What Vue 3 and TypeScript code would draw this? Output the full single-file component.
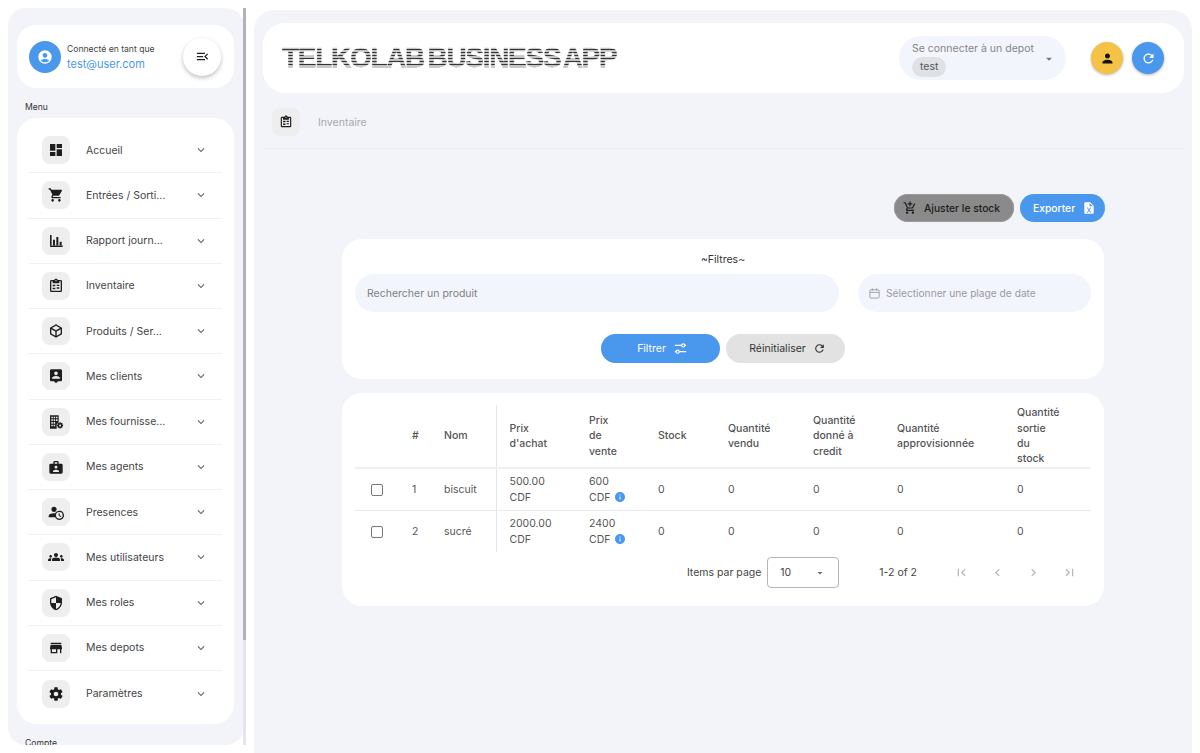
<script setup lang="ts">
const icons = {
  dashboard: 'M3 13h8V3H3v10zm0 8h8v-6H3v6zm10 0h8V11h-8v10zm0-18v6h8V3h-8z',
  cart: 'M7 18c-1.1 0-1.99.9-1.99 2S5.9 22 7 22s2-.9 2-2-.9-2-2-2zM1 2v2h2l3.6 7.59-1.35 2.45c-.16.28-.25.61-.25.96 0 1.1.9 2 2 2h12v-2H7.42c-.14 0-.25-.11-.25-.25l.03-.12.9-1.63h7.45c.75 0 1.41-.41 1.75-1.03l3.58-6.49c.08-.14.12-.31.12-.48 0-.55-.45-1-1-1H5.21l-.94-2H1zm16 16c-1.1 0-1.99.9-1.99 2s.89 2 1.99 2 2-.9 2-2-.9-2-2-2z',
  chart: 'M3 3h2.4v16H3zM3 18.6h19V21H3zM7.5 10h3v9h-3zM12.5 6h3v13h-3zM17.5 13h3v6h-3z',
  clipboard: 'M19 3h-4.18C14.4 1.84 13.3 1 12 1s-2.4.84-2.82 2H5a2 2 0 0 0-2 2v14a2 2 0 0 0 2 2h14a2 2 0 0 0 2-2V5a2 2 0 0 0-2-2zM12 3c.55 0 1 .45 1 1s-.45 1-1 1-1-.45-1-1 .45-1 1-1zM19 19H5V5h2v3h10V5h2v14zM7 10h4v2.5H7zM13 10h4v2H13zM7 14.5h4V17H7zM13 14h4v2h-4z',
  cube: 'M21,16.5C21,16.88 20.79,17.21 20.47,17.38L12.57,21.82C12.41,21.94 12.21,22 12,22C11.79,22 11.59,21.94 11.43,21.82L3.53,17.38C3.21,17.21 3,16.88 3,16.5V7.5C3,7.12 3.21,6.79 3.53,6.62L11.43,2.18C11.59,2.06 11.79,2 12,2C12.21,2 12.41,2.06 12.57,2.18L20.47,6.62C20.79,6.79 21,7.12 21,7.5V16.5M12,4.15L6.04,7.5L12,10.85L17.96,7.5L12,4.15M5,15.91L11,19.29V12.58L5,9.21V15.91M19,15.91V9.21L13,12.58V19.29L19,15.91Z',
  personPin: 'M19 2H5c-1.11 0-2 .9-2 2v14c0 1.1.89 2 2 2h4l3 3 3-3h4c1.1 0 2-.9 2-2V4c0-1.1-.9-2-2-2zm-7 3.3c1.49 0 2.7 1.21 2.7 2.7 0 1.49-1.21 2.7-2.7 2.7-1.49 0-2.7-1.21-2.7-2.7 0-1.49 1.21-2.7 2.7-2.7zM18 16H6v-.9c0-2 4-3.1 6-3.1s6 1.1 6 3.1v.9z',
  building: 'M3 2h13v10.5a6 6 0 0 0-3 3.5v6H3zM5 4v2.5h2.2V4zM8.5 4v2.5h2.2V4zM12 4v2.5h2.2V4zM5 8v2.5h2.2V8zM8.5 8v2.5h2.2V8zM12 8v2.5h2.2V8zM5 12v2.5h2.2V12zM8.5 12v2.5h2.2V12zM5 16v2.5h2.2V16zM8.5 16v2.5h2.2V16zM17.2 12.5h1.8l.3 1.5 1.4-.8 1.3 1.3-.8 1.4 1.5.3v1.8l-1.5.3.8 1.4-1.3 1.3-1.4-.8-.3 1.5h-1.8l-.3-1.5-1.4.8-1.3-1.3.8-1.4-1.5-.3v-1.8l1.5-.3-.8-1.4 1.3-1.3 1.4.8zM18.1 15.9a1.5 1.5 0 1 0 0 3 1.5 1.5 0 0 0 0-3z',
  badge: 'M20 7h-4V5a2 2 0 0 0-2-2h-4a2 2 0 0 0-2 2v2H4a2 2 0 0 0-2 2v11a2 2 0 0 0 2 2h16a2 2 0 0 0 2-2V9a2 2 0 0 0-2-2zM10 5h4v2h-4zM12 10a2.2 2.2 0 1 1 0 4.4 2.2 2.2 0 0 1 0-4.4zM7.5 19.5v-1.2c0-1.5 3-2.3 4.5-2.3s4.5.8 4.5 2.3v1.2z',
  accountClock: 'M10.63,14.1C12.23,10.58 16.38,9.03 19.9,10.63C23.42,12.23 24.97,16.38 23.37,19.9C22.24,22.4 19.75,24 17,24C14.3,24 11.83,22.44 10.67,20H1V18C1.06,16.86 1.84,15.93 3.34,15.18C4.84,14.43 6.72,14.04 9,14C9.57,14 10.11,14.05 10.63,14.1V14.1M9,4C10.12,4.03 11.06,4.42 11.81,5.17C12.56,5.92 12.93,6.86 12.93,8C12.93,9.14 12.56,10.08 11.81,10.83C11.06,11.58 10.12,11.95 9,11.95C7.88,11.95 6.94,11.58 6.19,10.83C5.44,10.08 5.07,9.14 5.07,8C5.07,6.86 5.44,5.92 6.19,5.17C6.94,4.42 7.88,4.03 9,4M17,22A5,5 0 0,0 22,17A5,5 0 0,0 17,12A5,5 0 0,0 12,17A5,5 0 0,0 17,22M16,14H17.5V16.82L19.94,18.23L19.19,19.53L16,17.69V14Z',
  groups: 'M12 12.75c1.63 0 3.07.39 4.24.9 1.08.48 1.76 1.56 1.76 2.73V18H6v-1.61c0-1.18.68-2.26 1.76-2.73 1.17-.52 2.61-.91 4.24-.91zM4 13c1.1 0 2-.9 2-2s-.9-2-2-2-2 .9-2 2 .9 2 2 2zm1.13 1.1c-.37-.06-.74-.1-1.13-.1-.99 0-1.93.21-2.78.58C.48 14.9 0 15.62 0 16.43V18h4.5v-1.61c0-.83.23-1.61.63-2.29zM20 13c1.1 0 2-.9 2-2s-.9-2-2-2-2 .9-2 2 .9 2 2 2zm4 3.43c0-.81-.48-1.53-1.22-1.85-.85-.37-1.79-.58-2.78-.58-.39 0-.76.04-1.13.1.4.68.63 1.46.63 2.29V18H24v-1.57zM12 6c1.66 0 3 1.34 3 3s-1.34 3-3 3-3-1.34-3-3 1.34-3 3-3z',
  security: 'M12 1L3 5v6c0 5.55 3.84 10.74 9 12 5.16-1.26 9-6.45 9-12V5l-9-4zm0 10.99h7c-.53 4.12-3.28 7.79-7 8.94V12H5V6.3l7-3.11v8.8z',
  store: 'M20 4H4v2h16V4zm1 10v-2l-1-5H4l-1 5v2h1v6h10v-6h4v6h2v-6h1zm-9 4H6v-4h6v4z',
  cog: 'M12,15.5A3.5,3.5 0 0,1 8.5,12A3.5,3.5 0 0,1 12,8.5A3.5,3.5 0 0,1 15.5,12A3.5,3.5 0 0,1 12,15.5M19.43,12.97C19.47,12.65 19.5,12.33 19.5,12C19.5,11.67 19.47,11.34 19.43,11L21.54,9.37C21.73,9.22 21.78,8.95 21.66,8.73L19.66,5.27C19.54,5.05 19.27,4.96 19.05,5.05L16.56,6.05C16.04,5.66 15.5,5.32 14.87,5.07L14.5,2.42C14.46,2.18 14.25,2 14,2H10C9.75,2 9.54,2.18 9.5,2.42L9.13,5.07C8.5,5.32 7.96,5.66 7.44,6.05L4.95,5.05C4.73,4.96 4.46,5.05 4.34,5.27L2.34,8.73C2.21,8.95 2.27,9.22 2.46,9.37L4.57,11C4.53,11.34 4.5,11.67 4.5,12C4.5,12.33 4.53,12.65 4.57,12.97L2.46,14.63C2.27,14.78 2.21,15.05 2.34,15.27L4.34,18.73C4.46,18.95 4.73,19.03 4.95,18.95L7.44,17.94C7.96,18.34 8.5,18.68 9.13,18.93L9.5,21.58C9.54,21.82 9.75,22 10,22H14C14.25,22 14.46,21.82 14.5,21.58L14.87,18.93C15.5,18.67 16.04,18.34 16.56,17.94L19.05,18.95C19.27,19.03 19.54,18.95 19.66,18.73L21.66,15.27C21.78,15.05 21.73,14.78 21.54,14.63L19.43,12.97Z',
  accountCircle: 'M12 2C6.48 2 2 6.48 2 12s4.48 10 10 10 10-4.48 10-10S17.52 2 12 2zm0 4c1.93 0 3.5 1.57 3.5 3.5S13.93 13 12 13s-3.5-1.57-3.5-3.5S10.07 6 12 6zm0 14c-2.03 0-4.43-.82-6.14-2.88C7.55 15.8 9.68 15 12 15s4.45.8 6.14 2.12C16.43 19.18 14.03 20 12 20z',
  menuOpen: 'M3 18h13v-2H3v2zm0-5h10v-2H3v2zm0-7v2h13V6H3zm18 9.59L17.42 12 21 8.41 19.59 7l-5 5 5 5L21 15.59z',
  chevron: 'M7.41 8.59L12 13.17l4.59-4.58L18 10l-6 6-6-6z',
  person: 'M12 12c2.21 0 4-1.79 4-4s-1.79-4-4-4-4 1.79-4 4 1.79 4 4 4zm0 2c-2.67 0-8 1.34-8 4v2h16v-2c0-2.66-5.33-4-8-4z',
  refresh: 'M17.65 6.35C16.2 4.9 14.21 4 12 4c-4.42 0-7.99 3.58-7.99 8s3.57 8 7.99 8c3.73 0 6.84-2.55 7.73-6h-2.08c-.82 2.33-3.04 4-5.65 4-3.31 0-6-2.69-6-6s2.69-6 6-6c1.66 0 3.14.69 4.22 1.78L13 11h7V4l-2.35 2.35z',
  addCart: 'M11 9h2V6h3V4h-3V1h-2v3H8v2h3v3zm-4 9c-1.1 0-1.99.9-1.99 2S5.9 22 7 22s2-.9 2-2-.9-2-2-2zm10 0c-1.1 0-1.99.9-1.99 2s.89 2 1.99 2 2-.9 2-2-.9-2-2-2zm-9.83-3.25l.03-.12.9-1.63h7.45c.75 0 1.41-.41 1.75-1.03l3.86-7.01L19.42 4h-.01l-1.1 2-2.76 5H8.53l-.13-.27L6.16 6l-.95-2-.94-2H1v2h2l3.6 7.59-1.35 2.45c-.16.28-.25.61-.25.96 0 1.1.9 2 2 2h12v-2H7.42c-.13 0-.25-.11-.25-.25z',
  fileExcel: 'M14,2H6A2,2 0 0,0 4,4V20A2,2 0 0,0 6,22H18A2,2 0 0,0 20,20V8L14,2M15.8,20H14L12,16.6L10,20H8.2L11.1,15.5L8.2,11H10L12,14.4L14,11H15.8L12.9,15.5L15.8,20M13,9V3.5L18.5,9H13Z',
  info: 'M12 2C6.48 2 2 6.48 2 12s4.48 10 10 10 10-4.48 10-10S17.52 2 12 2zm1 15h-2v-6h2v6zm0-8h-2V7h2v2z',
  caret: 'M7 10l5 5 5-5z',
  first: 'M18.41 16.59L13.82 12l4.59-4.59L17 6l-6 6 6 6zM6 6h2v12H6z',
  prev: 'M15.41 7.41L14 6l-6 6 6 6 1.41-1.41L10.83 12z',
  next: 'M10 6L8.59 7.41 13.17 12l-4.58 4.59L10 18l6-6z',
  last: 'M5.59 7.41L10.18 12l-4.59 4.59L7 18l6-6-6-6zM16 6h2v12h-2z',
}

const menu = [
  { label: 'Accueil', icon: icons.dashboard },
  { label: 'Entrées / Sorti...', icon: icons.cart },
  { label: 'Rapport journ...', icon: icons.chart },
  { label: 'Inventaire', icon: icons.clipboard },
  { label: 'Produits / Ser...', icon: icons.cube },
  { label: 'Mes clients', icon: icons.personPin },
  { label: 'Mes fournisse...', icon: icons.building },
  { label: 'Mes agents', icon: icons.badge },
  { label: 'Presences', icon: icons.accountClock },
  { label: 'Mes utilisateurs', icon: icons.groups },
  { label: 'Mes roles', icon: icons.security },
  { label: 'Mes depots', icon: icons.store },
  { label: 'Paramètres', icon: icons.cog },
]

const columnWidths = [41, 32, 68, 77, 69, 70, 85, 84, 120, 90]

const rows = [
  { id: 1, name: 'biscuit', buy: '500.00', sell: '600' },
  { id: 2, name: 'sucré', buy: '2000.00', sell: '2400' },
]

const pager = [icons.first, icons.prev, icons.next, icons.last]
</script>

<template>
  <div class="page">
    <div class="side-wrap">
      <aside class="sidebar">
        <div class="user-card">
          <div class="avatar">
            <svg viewBox="0 0 24 24" class="avatar-icon"><path :d="icons.accountCircle" /></svg>
          </div>
          <div class="user-text">
            <span class="user-line">Connecté en tant que</span>
            <span class="user-mail">test@user.com</span>
          </div>
          <button class="toggle">
            <svg viewBox="0 0 24 24"><path :d="icons.menuOpen" /></svg>
          </button>
        </div>

        <div class="side-label">Menu</div>

        <nav class="menu-card">
          <div v-for="item in menu" :key="item.label" class="menu-item">
            <span class="icon-box">
              <svg viewBox="0 0 24 24"><path :d="item.icon" fill-rule="evenodd" /></svg>
            </span>
            <span class="menu-text">{{ item.label }}</span>
            <svg viewBox="0 0 24 24" class="chevron"><path :d="icons.chevron" /></svg>
          </div>
        </nav>

        <div class="side-label account">Compte</div>
      </aside>
      <div class="scroll-track"><div class="scroll-thumb"></div></div>
    </div>

    <main class="main">
      <header class="top-card">
        <h1 class="brand">TELKOLAB BUSINESS APP</h1>
        <div class="depot">
          <div class="depot-text">
            <span class="depot-label">Se connecter à un depot</span>
            <span class="chip">test</span>
          </div>
          <svg viewBox="0 0 24 24" class="depot-caret"><path :d="icons.caret" /></svg>
        </div>
        <button class="round yellow">
          <svg viewBox="0 0 24 24"><path :d="icons.person" /></svg>
        </button>
        <button class="round blue">
          <svg viewBox="0 0 24 24"><path :d="icons.refresh" /></svg>
        </button>
      </header>

      <div class="crumb">
        <span class="icon-box">
          <svg viewBox="0 0 24 24"><path :d="icons.clipboard" fill-rule="evenodd" /></svg>
        </span>
        <span class="crumb-text">Inventaire</span>
      </div>

      <section class="content">
        <div class="actions">
          <button class="pill adjust">
            <svg viewBox="0 0 24 24"><path :d="icons.addCart" /></svg>
            Ajuster le stock
          </button>
          <button class="pill export">
            Exporter
            <svg viewBox="0 0 24 24"><path :d="icons.fileExcel" /></svg>
          </button>
        </div>

        <div class="card filters">
          <div class="filters-title">~Filtres~</div>
          <div class="filters-row">
            <div class="field grow">Rechercher un produit</div>
            <div class="field dates">
              <svg viewBox="0 0 24 24" class="calendar">
                <rect x="3.5" y="5" width="17" height="15.5" rx="2" />
                <path d="M3.5 10h17M8 2.5V7M16 2.5V7" />
              </svg>
              Sélectionner une plage de date
            </div>
          </div>
          <div class="filters-buttons">
            <button class="wide-btn primary">
              Filtrer
              <svg viewBox="0 0 24 24" class="tune">
                <path d="M3 7h11M19 7h2M3 17h2M10 17h11" />
                <circle cx="16.5" cy="7" r="2.5" />
                <circle cx="7.5" cy="17" r="2.5" />
              </svg>
            </button>
            <button class="wide-btn neutral">
              Réinitialiser
              <svg viewBox="0 0 24 24"><path :d="icons.refresh" /></svg>
            </button>
          </div>
        </div>

        <div class="card table-card">
          <table class="grid">
            <colgroup>
              <col v-for="(w, i) in columnWidths" :key="i" :style="{ width: w + 'px' }" />
            </colgroup>
            <thead>
              <tr>
                <th></th>
                <th>#</th>
                <th class="split">Nom</th>
                <th class="after-split">Prix<br />d'achat</th>
                <th>Prix<br />de<br />vente</th>
                <th>Stock</th>
                <th>Quantité<br />vendu</th>
                <th>Quantité<br />donné à<br />credit</th>
                <th>Quantité<br />approvisionnée</th>
                <th>Quantité<br />sortie<br />du<br />stock</th>
              </tr>
            </thead>
            <tbody>
              <tr v-for="row in rows" :key="row.id">
                <td><span class="check"></span></td>
                <td>{{ row.id }}</td>
                <td class="split">{{ row.name }}</td>
                <td class="after-split">{{ row.buy }}<br />CDF</td>
                <td>
                  {{ row.sell }}<br />CDF
                  <svg viewBox="0 0 24 24" class="info"><path :d="icons.info" /></svg>
                </td>
                <td>0</td>
                <td>0</td>
                <td>0</td>
                <td>0</td>
                <td>0</td>
              </tr>
            </tbody>
          </table>

          <div class="pagination">
            <span class="per-page">Items par page</span>
            <div class="per-select">
              <span>10</span>
              <svg viewBox="0 0 24 24"><path :d="icons.caret" /></svg>
            </div>
            <span class="range">1-2 of 2</span>
            <div class="pager">
              <span v-for="(p, i) in pager" :key="i" class="pager-btn">
                <svg viewBox="0 0 24 24"><path :d="p" /></svg>
              </span>
            </div>
          </div>
        </div>
      </section>
    </main>
  </div>
</template>

<style>
html,
body {
  margin: 0;
  background: #fff;
}
</style>

<style scoped>
.page {
  display: flex;
  height: 100vh;
  overflow: hidden;
  font-family: Inter, 'Noto Sans', sans-serif;
  font-size: 10.5px;
  color: #444;
}

button {
  font-family: inherit;
  letter-spacing: inherit;
  border: none;
  cursor: pointer;
}

/* SIDEBAR */
.side-wrap {
  position: relative;
  flex: 0 0 238px;
  height: 737px;
  margin: 8px 8px 0 8px;
}

.sidebar {
  width: 236px;
  height: 100%;
  box-sizing: border-box;
  padding: 17px 10px 0 9px;
  background: #f2f4f9;
  border-radius: 18px;
  overflow: hidden;
}

.scroll-track {
  position: absolute;
  top: 0;
  right: 0;
  bottom: 0;
  width: 3px;
  background: #e6e6ea;
}

.scroll-thumb {
  height: 632px;
  background: #b2b2b6;
}

.user-card {
  display: flex;
  align-items: center;
  height: 63px;
  box-sizing: border-box;
  padding: 0 13px 0 12px;
  background: #fff;
  border-radius: 20px;
}

.avatar {
  flex: none;
  width: 32px;
  height: 32px;
  display: flex;
  align-items: center;
  justify-content: center;
  border-radius: 50%;
  background: #4a97ee;
}

.avatar-icon {
  width: 16px;
  height: 16px;
  fill: #fff;
}

.user-text {
  flex: 1;
  display: flex;
  flex-direction: column;
  gap: 3px;
  margin: 1px 0 0 6px;
  min-width: 0;
}

.user-line {
  font-size: 8.6px;
  color: #444;
  white-space: nowrap;
}

.user-mail {
  font-size: 11px;
  color: #4a97ee;
}

.toggle {
  flex: none;
  width: 38px;
  height: 38px;
  display: flex;
  align-items: center;
  justify-content: center;
  padding: 0;
  border-radius: 50%;
  background: #fff;
  box-shadow: 0 2px 4px rgba(0, 0, 0, 0.25);
}

.toggle svg {
  width: 15px;
  height: 15px;
  fill: #222;
}

.side-label {
  margin: 13px 0 5px 8px;
  font-size: 8.6px;
  line-height: 12px;
  color: #333;
}

.side-label.account {
  margin-top: 13px;
}

.menu-card {
  padding: 10px 12px 8px;
  background: #fff;
  border-radius: 20px;
}

.menu-item {
  display: flex;
  align-items: center;
  height: 45.25px;
  box-sizing: border-box;
  padding: 0 13px;
  border-bottom: 1px solid #f0f0f2;
}

.menu-item:last-child {
  border-bottom: none;
}

.icon-box {
  flex: none;
  width: 28px;
  height: 28px;
  display: flex;
  align-items: center;
  justify-content: center;
  background: #eee;
  border-radius: 8px;
}

.icon-box svg {
  width: 16px;
  height: 16px;
  fill: #1e1e1e;
}

.menu-text {
  flex: 1;
  margin-left: 16px;
  color: #444;
  white-space: nowrap;
}

.chevron {
  flex: none;
  width: 14px;
  height: 14px;
  margin-right: 1px;
  fill: #666;
}

/* MAIN */
.main {
  flex: 1;
  margin: 10px 8px 0 0;
  padding: 13px 8px 0 9px;
  background: #f2f4f9;
  border-radius: 20px 20px 0 0;
  min-width: 0;
}

.top-card {
  display: flex;
  align-items: center;
  height: 70px;
  box-sizing: border-box;
  padding: 0 20px 0 19px;
  background: #fff;
  border-radius: 22px;
}

.brand {
  flex: 1;
  margin: 0;
  font-family: 'Liberation Sans', sans-serif;
  font-size: 28px;
  line-height: 30px;
  font-weight: 700;
  letter-spacing: -1.3px;
  word-spacing: -3px;
  white-space: nowrap;
  color: transparent;
  -webkit-text-stroke: 0.5px transparent;
  background: repeating-linear-gradient(180deg, #333 0 1.5px, #c4c4c4 1.5px 3px);
  -webkit-background-clip: text;
  background-clip: text;
}

.depot {
  flex: none;
  width: 167px;
  height: 44px;
  box-sizing: border-box;
  display: flex;
  align-items: center;
  justify-content: space-between;
  margin-right: 25px;
  padding: 2px 10px 0 13px;
  background: #f3f5fd;
  border-radius: 22px;
}

.depot-text {
  display: flex;
  flex-direction: column;
  align-items: flex-start;
  gap: 1px;
}

.depot-label {
  color: #858585;
  white-space: nowrap;
  line-height: 14px;
}

.chip {
  padding: 0 8px;
  line-height: 20px;
  color: #555;
  background: #e0e1e6;
  border-radius: 10px;
}

.depot-caret {
  flex: none;
  width: 14px;
  height: 14px;
  fill: #777;
}

.round {
  flex: none;
  width: 32px;
  height: 32px;
  display: flex;
  align-items: center;
  justify-content: center;
  padding: 0;
  border-radius: 50%;
  box-shadow: 0 1px 3px rgba(0, 0, 0, 0.3);
}

.round + .round {
  margin-left: 9px;
}

.round svg {
  width: 15px;
  height: 15px;
}

.yellow {
  background: #f4c244;
}

.yellow svg {
  fill: #111;
}

.blue {
  background: #4a97ee;
}

.blue svg {
  fill: #fff;
}

.crumb {
  display: flex;
  align-items: center;
  height: 56px;
  box-sizing: border-box;
  padding: 3px 0 0 9px;
  border-bottom: 1px solid #e9e9ee;
}

.crumb .icon-box svg {
  width: 14px;
  height: 14px;
}

.crumb-text {
  margin-left: 18px;
  color: #a9a9ae;
}

.content {
  margin: 45px 80px 0 79px;
}

.actions {
  display: flex;
  justify-content: flex-end;
  gap: 6px;
  margin: 0 -1px 17px 0;
}

.pill {
  display: flex;
  align-items: center;
  height: 28px;
  padding: 0 13px;
  gap: 7px;
  border-radius: 14px;
  font-size: 10.3px;
  font-weight: 500;
}

.pill svg {
  flex: none;
  width: 14px;
  height: 14px;
}

.adjust {
  width: 120px;
  padding: 0 0 0 9px;
  background: #8a8a8a;
  color: #1c1c1c;
  box-shadow: 0 0 0 1px #9a9a9a inset;
}

.adjust svg {
  fill: #1c1c1c;
}

.export {
  width: 85px;
  background: #4a97ee;
  color: #fff;
}

.export svg {
  fill: #fff;
}

.card {
  background: #fff;
  border-radius: 20px;
}

.filters {
  height: 140px;
  box-sizing: border-box;
  padding: 13px 13px 0;
}

.filters-title {
  text-align: center;
  line-height: 16px;
  color: #333;
}

.filters-row {
  display: flex;
  gap: 19px;
  margin: 6px 0 22px;
}

.field {
  height: 38px;
  display: flex;
  align-items: center;
  box-sizing: border-box;
  padding-left: 12px;
  color: #808080;
  background: #f3f5fd;
  border-radius: 19px;
}

.grow {
  flex: 1;
}

.dates {
  flex: 0 0 233px;
  padding-left: 10px;
  color: #9a9a9f;
  gap: 5px;
  font-size: 10.2px;
  white-space: nowrap;
}

.calendar {
  flex: none;
  width: 13px;
  height: 13px;
  fill: none;
  stroke: #999;
  stroke-width: 1.6;
}

.filters-buttons {
  display: flex;
  justify-content: center;
  gap: 6px;
}

.wide-btn {
  width: 119px;
  height: 29px;
  box-sizing: border-box;
  display: flex;
  align-items: center;
  justify-content: center;
  gap: 7px;
  padding: 0 0 0 4px;
  font-size: 10.5px;
  border-radius: 15px;
}

.wide-btn svg {
  flex: none;
  width: 13px;
  height: 13px;
}

.primary {
  background: #4a97ee;
  color: #fff;
}

.wide-btn .tune {
  width: 15px;
  height: 15px;
  fill: none;
  stroke: #fff;
  stroke-width: 1.8;
}

.neutral {
  background: #e2e2e2;
  color: #333;
}

.neutral svg {
  fill: #333;
}

.table-card {
  height: 213px;
  box-sizing: border-box;
  margin-top: 14px;
  padding: 12px 13px 0;
}

.grid {
  width: 736px;
  table-layout: fixed;
  border-collapse: collapse;
  line-height: 15.4px;
}

th {
  height: 62px;
  padding: 0 0 0 16px;
  text-align: left;
  font-weight: 500;
  color: #555;
  border-bottom: 2px solid #f0f0f2;
}

td {
  height: 41px;
  padding: 0 0 0 16px;
  color: #555;
  border-bottom: 1px solid #ebebed;
}

tbody tr:last-child td {
  border-bottom: none;
}

.split {
  border-right: 1px solid #e6e6e8;
}

th.after-split,
td.after-split {
  padding-left: 13px;
}

.check {
  display: block;
  width: 10px;
  height: 10px;
  border: 1.5px solid #777;
  border-radius: 2px;
}

.info {
  width: 12px;
  height: 12px;
  margin-left: 1px;
  vertical-align: -2px;
  fill: #4a97ee;
}

.pagination {
  display: flex;
  align-items: center;
  justify-content: flex-end;
  margin-top: 2.5px;
  padding-right: 4px;
}

.per-page {
  margin-right: 6px;
  color: #444;
}

.per-select {
  width: 72px;
  height: 31px;
  box-sizing: border-box;
  display: flex;
  align-items: center;
  justify-content: space-between;
  padding: 0 12px;
  color: #444;
  border: 1px solid #b5b5b5;
  border-radius: 4px;
}

.per-select svg {
  width: 12px;
  height: 12px;
  fill: #666;
}

.range {
  margin: 0 26px 0 40px;
  color: #444;
}

.pager {
  display: flex;
}

.pager-btn {
  width: 36px;
  height: 36px;
  display: flex;
  align-items: center;
  justify-content: center;
}

.pager-btn svg {
  width: 15px;
  height: 15px;
  fill: #b8b8b8;
}
</style>
